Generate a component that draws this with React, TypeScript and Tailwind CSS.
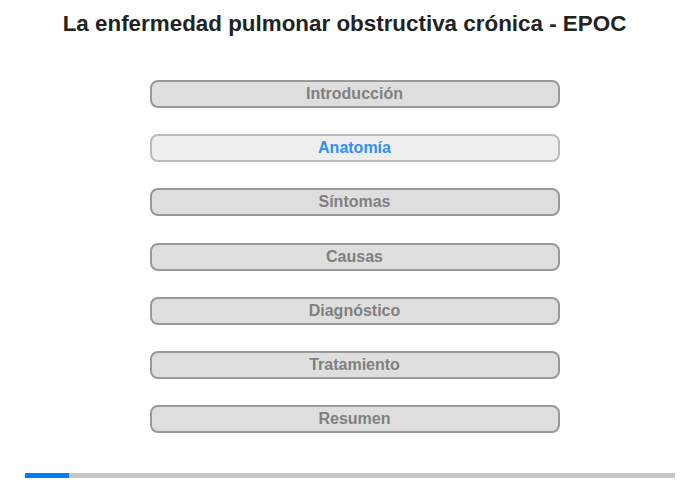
import React from "react";

const items = ["Introducción", "Anatomía", "Síntomas", "Causas", "Diagnóstico", "Tratamiento", "Resumen"];

export default function App() {
  return (
    <div className="w-[700px] h-[480px] bg-white flex flex-col" style={{ fontFamily: '"Liberation Sans", Arial, sans-serif' }}>
      <h1 className="text-[22.4px] font-bold text-[#222222] text-center leading-[26px] pt-[11px] pr-[11px]">
        La enfermedad pulmonar obstructiva crónica - EPOC
      </h1>
      <div className="flex flex-col items-center gap-[26.2px] mt-[43px] pl-[9px]">
        {items.map((t, i) => {
          const active = i === 1;
          return (
            <div
              key={t}
              className={
                active
                  ? "w-[410px] h-[28px] rounded-[8px] border-2 border-[#bbbbbb] bg-[#eeeeee] flex items-center justify-center text-[16px] font-bold text-[#2f8ff6]"
                  : "w-[410px] h-[28px] rounded-[8px] border-2 border-[#999999] bg-[#dedede] flex items-center justify-center text-[16px] font-bold text-[#808080]"
              }
            >
              {t}
            </div>
          );
        })}
      </div>
      <div className="mt-auto mb-[2px] px-[25px]">
        <div className="h-[5px] bg-[#c6c6c6] flex">
          <div className="w-[44px] h-full bg-[#007bff]" />
        </div>
      </div>
    </div>
  );
}
